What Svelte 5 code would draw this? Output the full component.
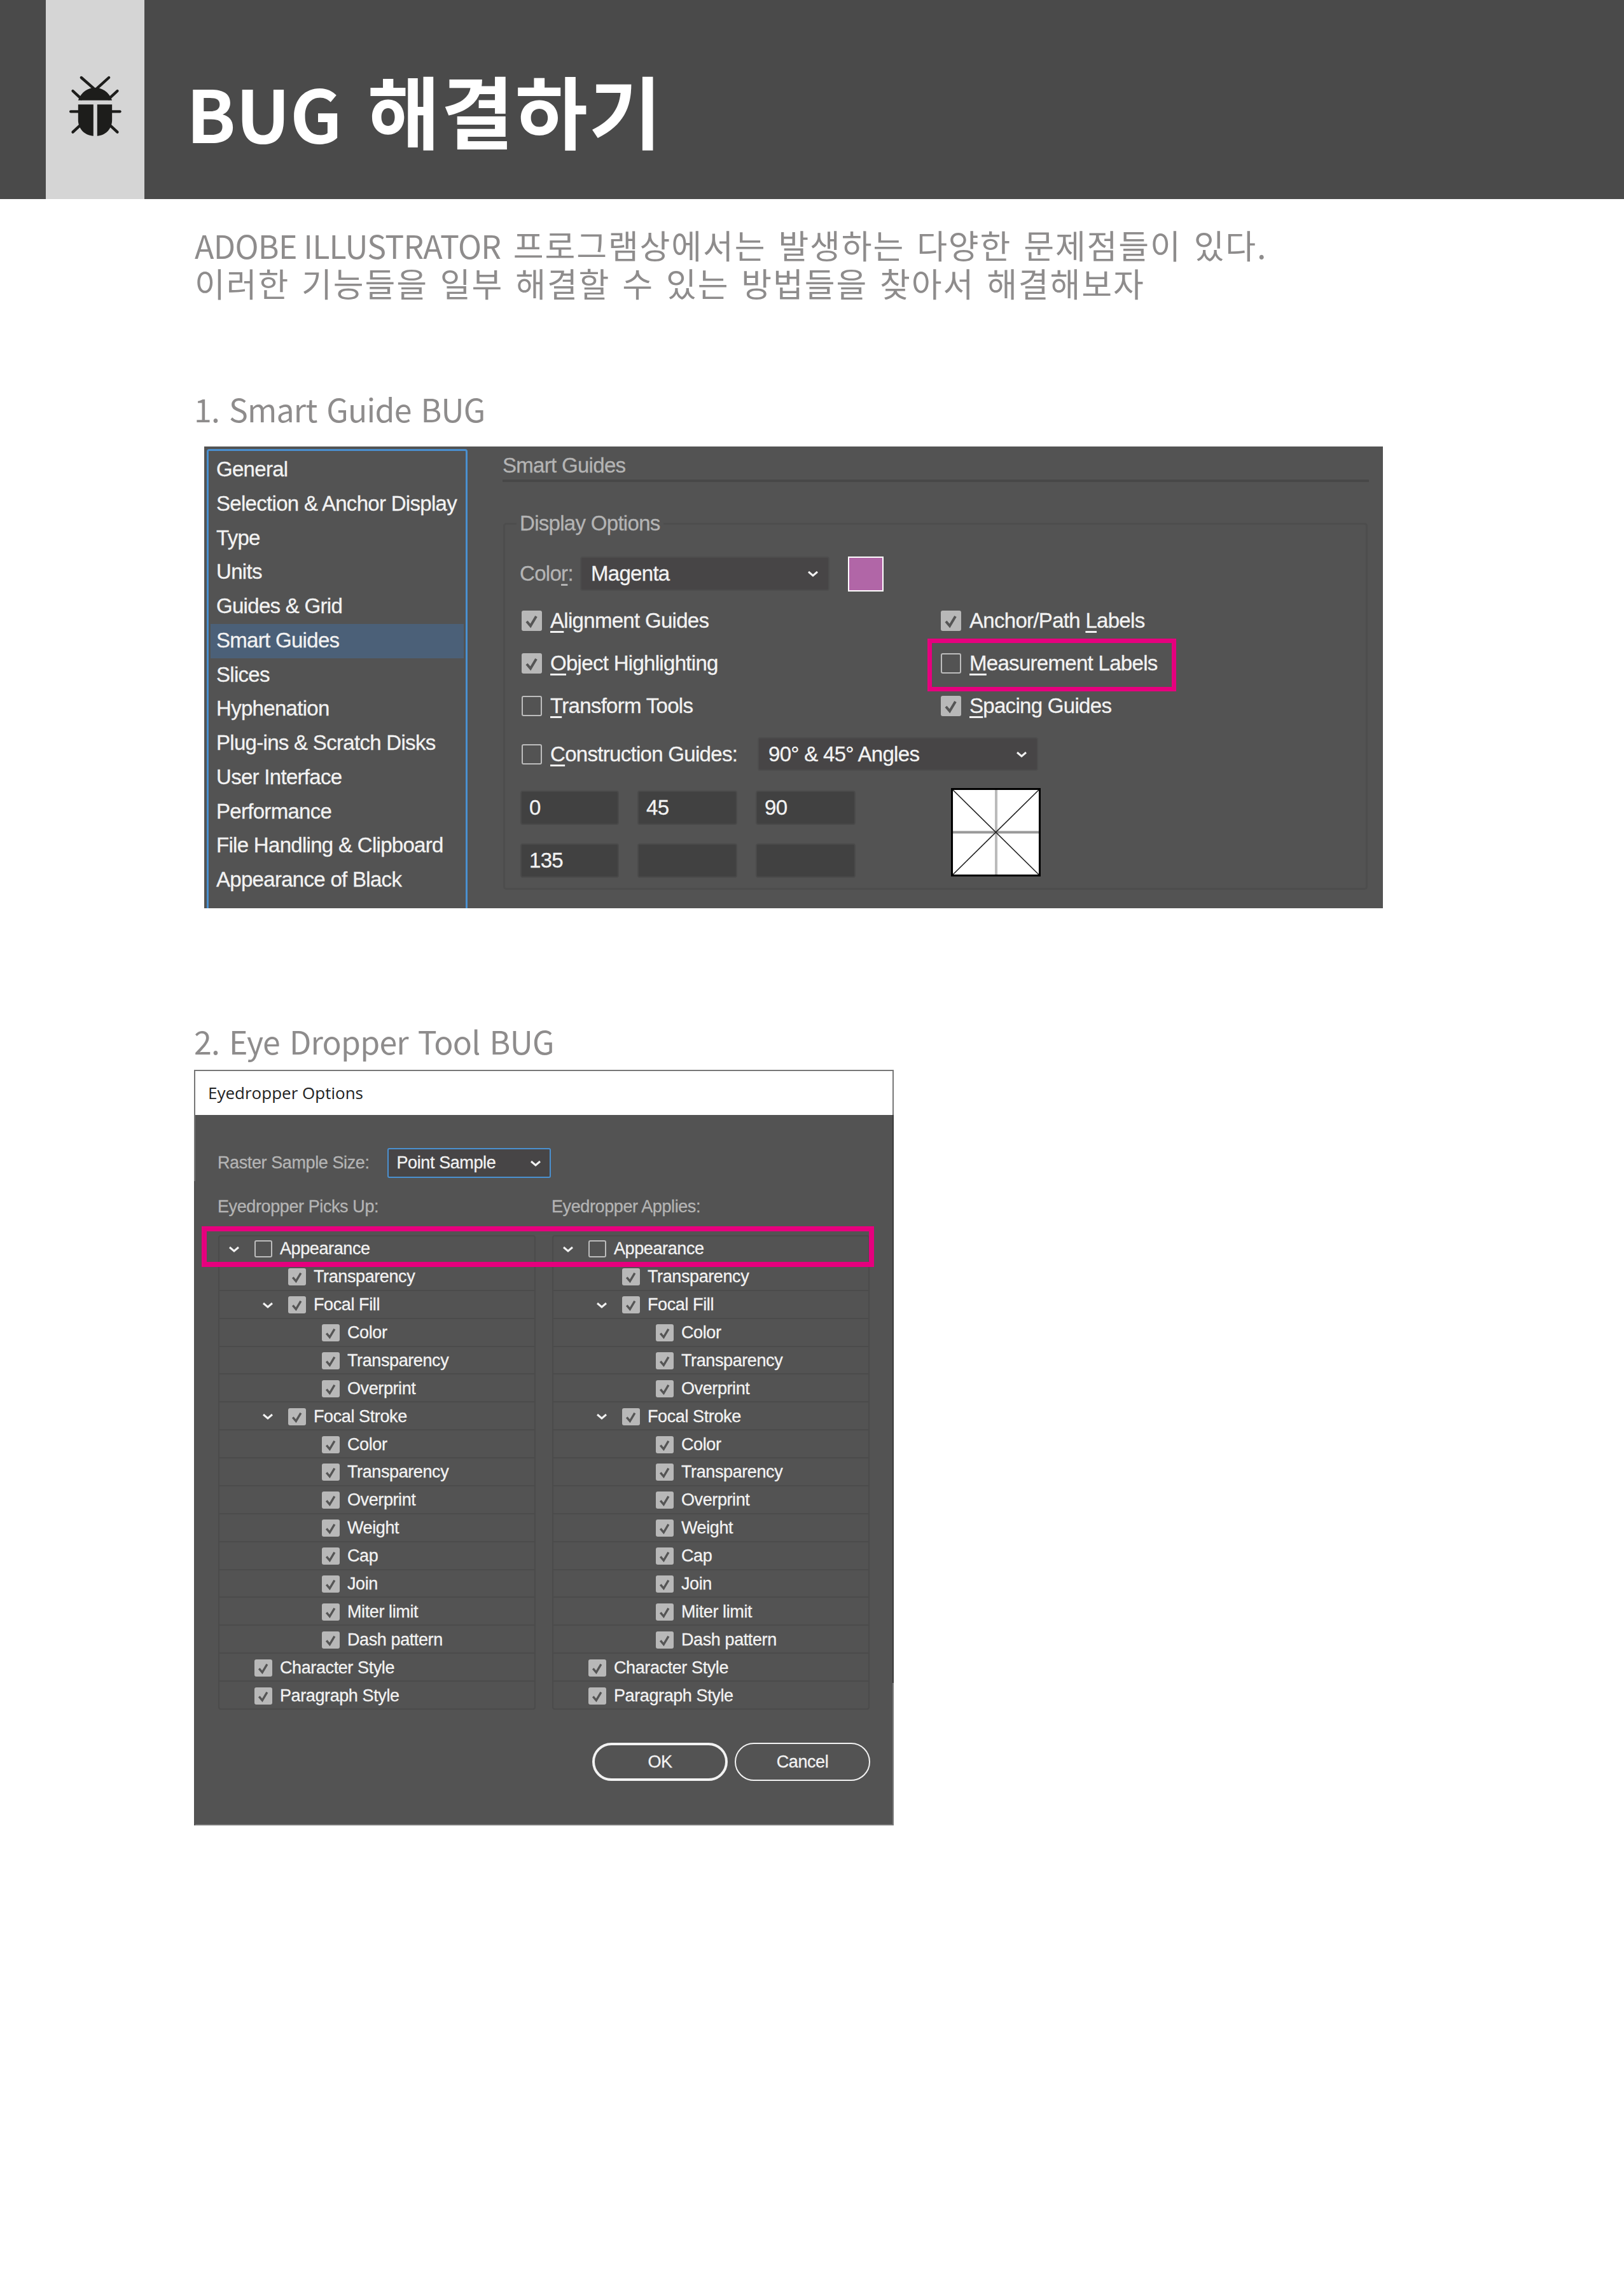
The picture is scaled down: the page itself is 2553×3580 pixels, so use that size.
<script lang="ts">
  // Prefs list, left pane of the Smart Guides dialog
  const prefs = [
    'General', 'Selection & Anchor Display', 'Type', 'Units', 'Guides & Grid',
    'Smart Guides', 'Slices', 'Hyphenation', 'Plug-ins & Scratch Disks',
    'User Interface', 'Performance', 'File Handling & Clipboard', 'Appearance of Black',
  ];

  // [before underline, underlined, after, checked]
  const guideOptions = [
    ['', 'A', 'lignment Guides', true],
    ['Anchor/Path ', 'L', 'abels', true],
    ['', 'O', 'bject Highlighting', true],
    ['', 'M', 'easurement Labels', false],
    ['', 'T', 'ransform Tools', false],
    ['', 'S', 'pacing Guides', true],
  ];

  const angles = ['0', '45', '90', '135', '', ''];

  // level, has chevron, label, checked
  const tree: [number, boolean, string, boolean][] = [
    [0, true, 'Appearance', false],
    [1, false, 'Transparency', true],
    [1, true, 'Focal Fill', true],
    [2, false, 'Color', true],
    [2, false, 'Transparency', true],
    [2, false, 'Overprint', true],
    [1, true, 'Focal Stroke', true],
    [2, false, 'Color', true],
    [2, false, 'Transparency', true],
    [2, false, 'Overprint', true],
    [2, false, 'Weight', true],
    [2, false, 'Cap', true],
    [2, false, 'Join', true],
    [2, false, 'Miter limit', true],
    [2, false, 'Dash pattern', true],
    [0, false, 'Character Style', true],
    [0, false, 'Paragraph Style', true],
  ];
</script>

{#snippet chevron()}
  <svg class="chevron" viewBox="0 0 18 10"><polyline points="2,2 9,8 16,2" /></svg>
{/snippet}

{#snippet check(on: boolean)}
  <span class="check" class:on>
    {#if on}
      <svg viewBox="0 0 32 32"><polyline points="8,17 14,24 23,9" /></svg>
    {/if}
  </span>
{/snippet}

<div class="page">
  <header class="banner">
    <div class="strip">
      <svg class="bug" viewBox="140 170 260 300">
        <g class="bug-legs">
          <line x1="205" y1="185" x2="262" y2="235" />
          <line x1="335" y1="185" x2="280" y2="235" />
          <line x1="165" y1="248" x2="205" y2="285" />
          <line x1="375" y1="248" x2="335" y2="285" />
          <line x1="155" y1="345" x2="195" y2="345" />
          <line x1="345" y1="345" x2="387" y2="345" />
          <line x1="165" y1="442" x2="205" y2="405" />
          <line x1="375" y1="442" x2="335" y2="405" />
        </g>
        <path class="bug-body" d="M190 292C205 250 240 232 270 232C300 232 335 250 350 292Z" />
        <path class="bug-body" d="M190 312H262V460C225 458 190 430 190 385Z" />
        <path class="bug-body" d="M350 312H280V460C315 458 350 430 350 385Z" />
      </svg>
    </div>
    <h1 class="title"><span class="latin">BUG{' '}</span><span class="hangul">해결하기</span></h1>
  </header>

  <p class="intro"><span class="latin">ADOBE ILLUSTRATOR{' '}</span><span class="hangul">프로그램상에서는 발생하는 다양한 문제점들이 있다.</span><br /><span class="hangul">이러한 기능들을 일부 해결할 수 있는 방법들을 찾아서 해결해보자</span></p>

  <h2 class="section first">1. Smart Guide BUG</h2>

  <div class="prefs ui">
    <ul class="pref-list">
      {#each prefs as name}
        <li class:selected={name === 'Smart Guides'}>{name}</li>
      {/each}
    </ul>

    <div class="pref-pane">
      <div class="pane-title">Smart Guides</div>
      <fieldset class="options">
        <legend>Display Options</legend>

        <div class="color-row">
          <span class="dim color-label">Colo<u>r</u>:</span>
          <div class="select color-select">Magenta {@render chevron()}</div>
          <div class="swatch"></div>
        </div>

        <div class="option-grid">
          {#each guideOptions as [pre, key, post, on]}
            <div class="option">
              {@render check(on as boolean)}
              <span>{pre}<u>{key}</u>{post}</span>
            </div>
          {/each}
        </div>

        <div class="construction">
          {@render check(false)}
          <span class="construction-label"><u>C</u>onstruction Guides:</span>
          <div class="select angle-select">90° &amp; 45° Angles {@render chevron()}</div>
        </div>

        <div class="angle-row">
          <div class="angles">
            {#each angles as a}
              <div class="angle">{a}</div>
            {/each}
          </div>
          <svg class="preview" viewBox="0 0 139 138" preserveAspectRatio="none">
            <rect x="0" y="0" width="139" height="138" fill="#fff" />
            <line x1="70" y1="0" x2="70" y2="138" stroke="#bbb" stroke-width="4" />
            <line x1="0" y1="69" x2="139" y2="69" stroke="#999" stroke-width="4" />
            <line x1="2" y1="2" x2="137" y2="136" stroke="#222" stroke-width="1.6" />
            <line x1="137" y1="2" x2="2" y2="136" stroke="#222" stroke-width="1.6" />
            <rect x="1.5" y="1.5" width="136" height="135" fill="none" stroke="#000" stroke-width="3" />
          </svg>
        </div>
      </fieldset>
    </div>

    <div class="marker marker-labels"></div>
  </div>

  <h2 class="section second">2. Eye Dropper Tool BUG</h2>

  <div class="eyedropper ui">
    <div class="dialog-title">Eyedropper Options</div>
    <div class="dialog-body">
      <div class="raster-row">
        <span class="dim">Raster Sample Size:</span>
        <div class="select raster-select">Point Sample {@render chevron()}</div>
      </div>

      <div class="columns heads">
        <span class="dim">Eyedropper Picks Up:</span>
        <span class="dim">Eyedropper Applies:</span>
      </div>

      <div class="columns trees">
        {#each [0, 1] as _}
          <div class="tree">
            {#each tree as [level, open, label, on]}
              <div class="tree-row level-{level}">
                {#if open}{@render chevron()}{/if}
                {@render check(on)}
                <span>{label}</span>
              </div>
            {/each}
          </div>
        {/each}
      </div>

      <div class="buttons">
        <button class="primary">OK</button>
        <button>Cancel</button>
      </div>
    </div>

    <div class="marker marker-appearance"></div>
  </div>
</div>

<style>
  :global(body) {
    margin: 0;
    background: #fff;
  }

  .page {
    width: 2553px;
    height: 3580px;
    overflow: hidden;
    font-family: "Noto Sans CJK KR", "Noto Sans", sans-serif;
  }

  /* banner */
  .banner {
    display: flex;
    height: 313px;
    padding-left: 72px;
    background: #4a4a4a;
  }

  .strip {
    display: flex;
    align-items: center;
    justify-content: center;
    width: 155px;
    padding-top: 20px;
    box-sizing: border-box;
    background: #d5d5d5;
  }

  .bug {
    width: 87px;
    height: 100px;
  }

  .bug-legs line {
    stroke: #1d1d1b;
    stroke-width: 13;
    stroke-linecap: round;
  }

  .bug-body {
    fill: #1d1d1b;
  }

  .title {
    margin: 0 0 0 66px;
    height: 313px;
    padding-top: 36px;
    box-sizing: border-box;
    color: #fff;
    font-size: 124px;
    font-weight: 700;
    line-height: 270px;
    white-space: nowrap;
  }

  .title .latin {
    font-size: 114px;
    word-spacing: 14px;
  }

  .title .hangul {
    letter-spacing: 2px;
  }

  .intro {
    height: 118px;
    margin: 42px 0 0 306px;
    color: #8e8c8c;
    font-size: 50px;
    line-height: 59px;
    white-space: nowrap;
  }

  .intro .latin {
    margin-right: 9px;
    letter-spacing: -0.7px;
  }

  .intro .hangul {
    font-size: 52px;
    letter-spacing: 1.85px;
    word-spacing: 5.5px;
  }

  .section {
    margin: 0 0 0 305px;
    color: #8e8c8c;
    font-size: 50px;
    font-weight: 400;
    letter-spacing: -0.8px;
    line-height: 60px;
    word-spacing: 4.5px;
  }

  .section.first {
    margin-top: 139px;
  }

  .section.second {
    margin-top: 178px;
  }

  /* dialog look */
  .ui {
    position: relative;
    box-sizing: border-box;
    background: #535353;
    color: #f2f2f2;
    font-family: "Liberation Sans", Arial, sans-serif;
    font-size: 33px;
    letter-spacing: -0.7px;
    -webkit-text-stroke: 0.3px;
  }

  .dim {
    color: #b4b4b4;
  }

  .ui u {
    text-decoration-thickness: 3px;
    text-underline-offset: 5px;
  }

  .select {
    display: flex;
    align-items: center;
    justify-content: space-between;
    box-sizing: border-box;
    background: #474546;
    border: 2px solid #4d4d4d;
    border-radius: 4px;
  }

  .chevron {
    width: 18px;
    height: 10px;
    flex: none;
  }

  .chevron polyline {
    fill: none;
    stroke: #f2f2f2;
    stroke-width: 3;
  }

  .check {
    display: block;
    flex: none;
    box-sizing: border-box;
    width: 32px;
    height: 32px;
    border: 2px solid #bdbdbd;
    border-radius: 3px;
  }

  .check.on {
    border: none;
    background: #b8b8b8;
  }

  .check svg {
    display: block;
    width: 100%;
    height: 100%;
  }

  .check polyline {
    fill: none;
    stroke: #555;
    stroke-width: 4;
  }

  .marker {
    position: absolute;
    box-sizing: border-box;
    border: 7px solid #e6007e;
  }

  /* smart guides */
  .prefs {
    display: flex;
    width: 1853px;
    height: 726px;
    margin: 30px 0 0 321px;
    padding: 4px 0 0 4px;
  }

  .pref-list {
    box-sizing: border-box;
    width: 410px;
    height: 722px;
    margin: 0;
    padding: 3px 3px 0;
    list-style: none;
    border: 3px solid #4a90d0;
    border-bottom: none;
    border-radius: 4px 4px 0 0;
  }

  .pref-list li {
    height: 53.75px;
    padding-left: 9px;
    line-height: 52px;
  }

  .pref-list li.selected {
    background: #4b6078;
  }

  .pref-pane {
    width: 1362px;
    margin-left: 55px;
  }

  .pane-title {
    height: 44px;
    margin-top: 4px;
    color: #b4b4b4;
    line-height: 44px;
    border-bottom: 4px solid #484848;
  }

  .options {
    box-sizing: border-box;
    width: 1359px;
    height: 596px;
    margin: 45px 0 0 1px;
    padding: 32px 0 0 23px;
    border: 3px solid #4d4d4d;
    border-radius: 5px;
  }

  legend {
    margin-left: -5px;
    padding: 0 5px;
    color: #b4b4b4;
    line-height: 40px;
  }

  .color-row {
    display: flex;
    align-items: center;
    height: 54px;
  }

  .color-label {
    width: 95px;
  }

  .color-select {
    width: 392px;
    height: 54px;
    padding: 0 15px;
  }

  .swatch {
    box-sizing: border-box;
    width: 56px;
    height: 55px;
    margin-left: 29px;
    background: #b166a7;
    border: 2px solid #fff;
  }

  .option-grid {
    display: grid;
    grid-template-columns: 659px 1fr;
    grid-auto-rows: 67px;
    margin-top: 13px;
    padding-left: 3px;
  }

  .option {
    display: flex;
    align-items: center;
    gap: 13px;
  }

  .construction {
    display: flex;
    align-items: center;
    height: 53px;
    margin-top: 16px;
    padding-left: 3px;
  }

  .construction-label {
    width: 326px;
    margin-left: 13px;
  }

  .angle-select {
    width: 441px;
    height: 53px;
    padding: 0 15px;
  }

  .angle-row {
    display: flex;
    align-items: flex-start;
    margin-top: 31px;
    padding-left: 1px;
  }

  .angles {
    display: grid;
    grid-template-columns: 155px 157px 157px;
    column-gap: 29px;
    row-gap: 29px;
  }

  .angle {
    box-sizing: border-box;
    height: 54px;
    padding-left: 12px;
    background: #414141;
    border: 2px solid #4a4a4a;
    border-radius: 4px;
    line-height: 50px;
  }

  .preview {
    flex: none;
    width: 141px;
    height: 139px;
    margin: -4px 0 0 150px;
  }

  .marker-labels {
    left: 1137px;
    top: 302px;
    width: 391px;
    height: 83px;
  }

  /* eyedropper */
  .eyedropper {
    width: 1100px;
    height: 1188px;
    margin: 16px 0 0 305px;
    border: 2px solid #777;
    font-size: 27px;
    letter-spacing: -0.4px;
  }

  /* the frame is only partly visible in the capture */
  .eyedropper::before {
    content: "";
    position: absolute;
    left: -2px;
    top: 173px;
    bottom: -2px;
    width: 2px;
    background: #535353;
  }

  .eyedropper::after {
    content: "";
    position: absolute;
    right: -2px;
    top: 69px;
    height: 893px;
    width: 2px;
    background: #3a3a3a;
  }

  .dialog-title {
    height: 69px;
    padding-left: 20px;
    background: #fff;
    color: #222;
    font-family: "Open Sans", sans-serif;
    font-size: 26px;
    letter-spacing: 0;
    line-height: 68px;
    -webkit-text-stroke: 0;
  }

  .dialog-body {
    padding: 52px 35px 0;
  }

  .raster-row {
    display: flex;
    align-items: center;
    height: 47px;
    gap: 28px;
  }

  .raster-select {
    width: 257px;
    height: 47px;
    padding: 0 13px;
    border-color: #4a90d0;
    border-radius: 3px;
  }

  .columns {
    display: grid;
    grid-template-columns: 499px 499px;
    column-gap: 26px;
  }

  .heads {
    margin-top: 25px;
    line-height: 40px;
  }

  .trees {
    margin: 25px 0 0 1px;
  }

  .tree {
    height: 746px;
    border-radius: 4px;
    box-shadow: inset 0 0 0 2px #4b4b4b;
  }

  .tree-row {
    display: flex;
    align-items: center;
    box-sizing: border-box;
    height: 43.88px;
    border-bottom: 2px solid #4b4b4b;
    padding-top: 2px;
  }

  .tree-row:last-child {
    border-bottom: none;
  }

  .tree-row.level-0 {
    padding-left: 57px;
  }

  .tree-row.level-1 {
    padding-left: 110px;
  }

  .tree-row.level-2 {
    padding-left: 163px;
  }

  .tree-row .check {
    width: 28px;
    height: 27px;
    margin-right: 12px;
  }

  .tree-row .chevron {
    margin-left: -41px;
    margin-right: 23px;
  }

  .buttons {
    display: flex;
    justify-content: flex-end;
    gap: 11px;
    margin-top: 52px;
  }

  button {
    width: 213px;
    height: 60px;
    padding: 0;
    background: transparent;
    border: 2px solid #f2f2f2;
    border-radius: 30px;
    color: #f2f2f2;
    font: inherit;
    letter-spacing: inherit;
  }

  button.primary {
    border-width: 4px;
  }

  .marker-appearance {
    left: 10px;
    top: 244px;
    width: 1057px;
    height: 64px;
    border-width: 8px;
  }
</style>
